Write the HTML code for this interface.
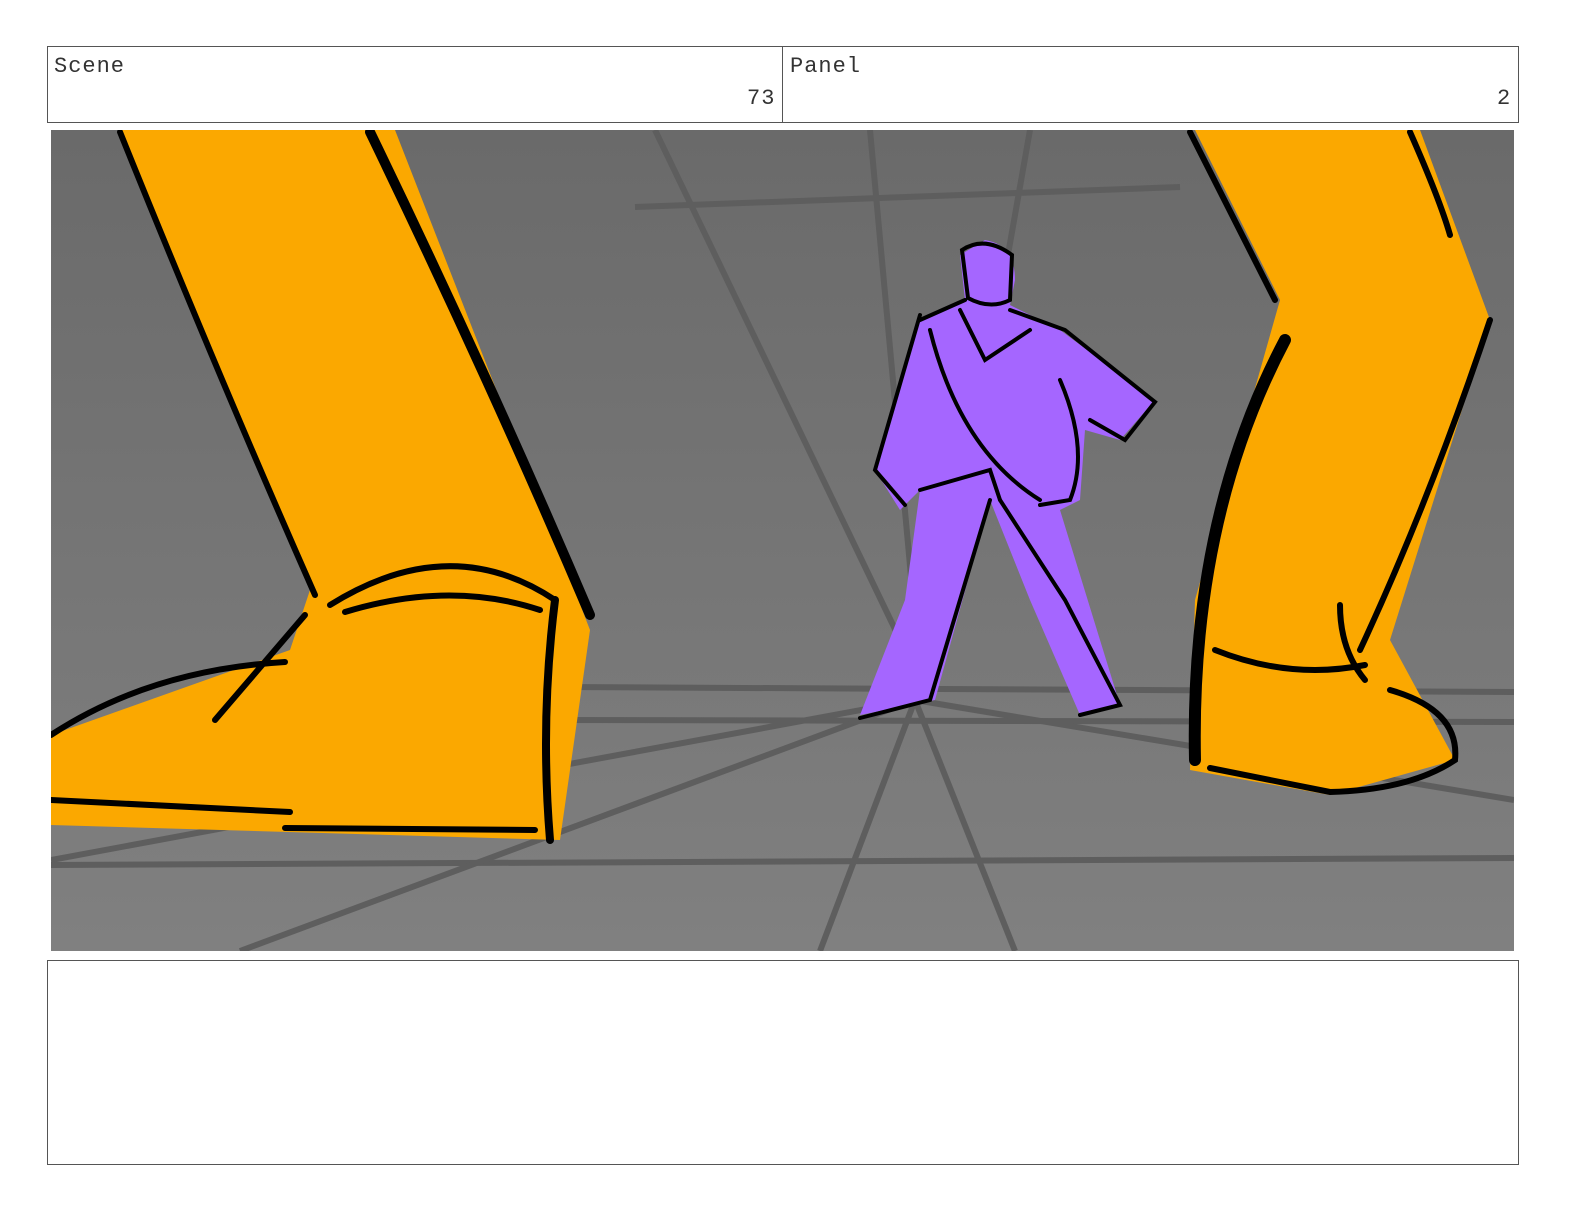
<!DOCTYPE html>
<html style="overflow:hidden"><head><meta charset="utf-8"><style>
html,body{margin:0;overflow:hidden;}
body{width:1584px;height:1224px;background:#fff;position:relative;font-family:"Liberation Mono",monospace;}
.box{position:absolute;border:1px solid #555;box-sizing:border-box;}
.t{position:absolute;font-size:22px;letter-spacing:1px;color:#333;}
</style></head><body>
<div class="box" style="left:47px;top:46px;width:1472px;height:77px"></div>
<div style="position:absolute;left:782px;top:46px;width:1px;height:77px;background:#555"></div>
<div class="t" style="left:54px;top:54px">Scene</div>
<div class="t" style="left:747px;top:86px">73</div>
<div class="t" style="left:790px;top:54px">Panel</div>
<div class="t" style="left:1497px;top:86px">2</div>
<svg style="position:absolute;left:51px;top:130px" width="1463" height="821" viewBox="51 130 1463 821">
<defs><linearGradient id="g" x1="0" y1="0" x2="0" y2="1"><stop offset="0" stop-color="#6a6a6a"/><stop offset="1" stop-color="#808080"/></linearGradient></defs>
<rect x="51" y="130" width="1463" height="821" fill="url(#g)"/>
<g stroke="#5e5e5e" stroke-width="6" fill="none">
<line x1="655" y1="130" x2="905" y2="650"/><line x1="870" y1="130" x2="915" y2="620"/><line x1="1030" y1="130" x2="1000" y2="300"/>
<line x1="635" y1="207" x2="1180" y2="187"/>
<line x1="560" y1="687" x2="1514" y2="692"/><line x1="560" y1="720" x2="1514" y2="722"/>
<line x1="51" y1="865" x2="1514" y2="858"/>
<line x1="915" y1="700" x2="820" y2="951"/><line x1="915" y1="700" x2="1015" y2="951"/>
<line x1="915" y1="700" x2="240" y2="951"/><line x1="915" y1="700" x2="51" y2="860"/>
<line x1="915" y1="700" x2="1514" y2="800"/>
</g>
<path d="M120 130 L395 130 L590 630 L560 840 L51 825 L51 735 L290 650 L310 590 Z" fill="#fba800"/>
<g stroke="#000" stroke-width="6" fill="none" stroke-linecap="round">
<path d="M120 132 Q220 380 315 595"/><path d="M370 132 Q490 380 590 615" stroke-width="10"/>
<path d="M51 735 Q150 670 285 662"/><path d="M51 800 L290 812"/><path d="M285 828 L535 830"/>
<path d="M330 605 Q450 530 555 600"/><path d="M345 612 Q450 580 540 610"/>
<path d="M555 600 Q540 720 550 840" stroke-width="8"/><path d="M215 720 L305 615"/>
</g>
<path d="M1195 130 L1420 130 L1490 320 L1390 640 L1455 760 L1330 795 L1190 770 L1195 600 L1280 300 Z" fill="#fba800"/>
<g stroke="#000" stroke-width="6" fill="none" stroke-linecap="round">
<path d="M1190 132 Q1240 230 1275 300"/><path d="M1410 132 Q1440 200 1450 235"/>
<path d="M1285 340 Q1190 520 1195 760" stroke-width="12"/><path d="M1490 320 Q1430 500 1360 650"/>
<path d="M1215 650 Q1290 680 1365 665"/><path d="M1390 690 Q1460 710 1455 760 Q1410 790 1330 792 L1210 768"/>
<path d="M1340 605 Q1340 650 1365 680"/>
</g>
<path d="M985 240 Q1015 245 1015 280 L1010 305 L1060 330 L1155 400 L1120 440 L1085 430 L1080 500 L1060 510 L1120 705 L1080 715 L1030 600 L990 500 L935 700 L860 715 L905 600 L920 490 L900 510 L875 470 L920 320 L965 300 L960 255 Z" fill="#a566ff"/>
<g stroke="#000" stroke-width="4" fill="none" stroke-linecap="round">
<path d="M962 250 Q985 235 1012 255 L1010 300 Q990 310 968 298 Z"/>
<path d="M920 315 Q895 400 875 470 L905 505"/><path d="M965 300 L920 320"/>
<path d="M1010 310 L1065 330 L1155 402 L1125 440 L1090 420"/><path d="M1060 380 Q1090 450 1070 500 L1040 505"/>
<path d="M930 330 Q960 450 1040 500"/><path d="M920 490 L990 470 L1000 500"/>
<path d="M990 500 L930 700 L860 718"/><path d="M1000 500 L1065 600 L1120 705 L1080 715"/>
<path d="M960 310 L985 360 L1030 330"/>
</g>
</svg>
<div class="box" style="left:47px;top:960px;width:1472px;height:205px"></div>
</body></html>
